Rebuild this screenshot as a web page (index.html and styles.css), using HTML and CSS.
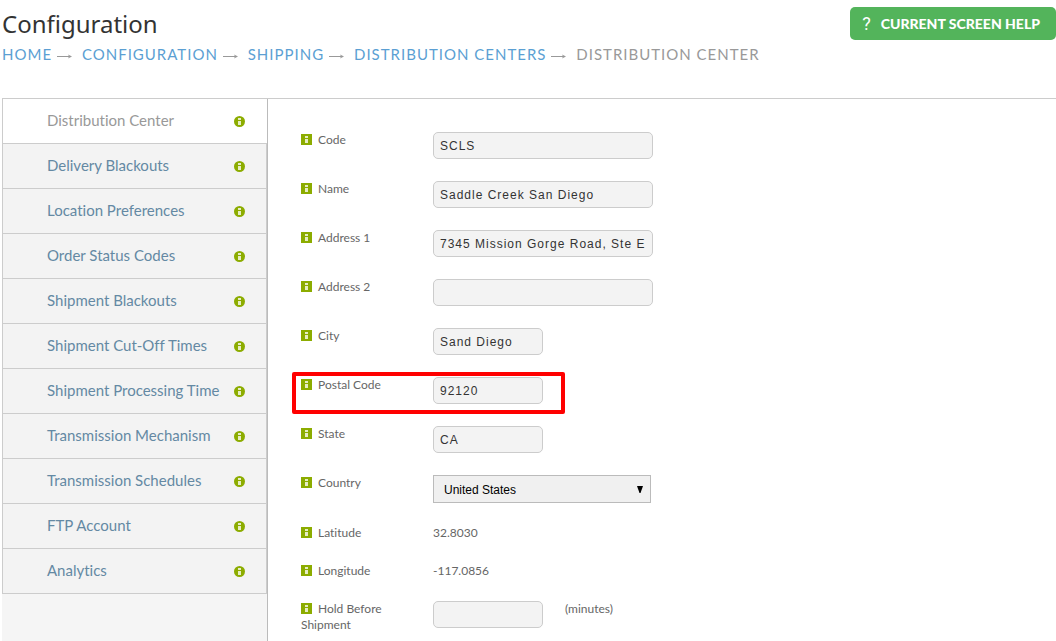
FILE: index.html
```html
<!DOCTYPE html>
<html lang="en">
<head>
  <meta charset="UTF-8" />
  <meta name="viewport" content="width=device-width, initial-scale=1.0"/>
  <title>Configuration - Distribution Center</title>
  <link rel="stylesheet" href="styles.css">
</head>
<body>

  <!-- Shared icons -->
  <svg class="sprite" aria-hidden="true">
    <symbol id="info-round" viewBox="0 0 11 11">
      <circle cx="5.5" cy="5.5" r="5.5" fill="#8cac00"/>
      <path d="M4 2h3v2H4zM4 5h3v4H4z" fill="#e6edc4"/>
    </symbol>
    <symbol id="info-square" viewBox="0 0 11 11">
      <path d="M0 0h11v11H0z" fill="#8cac00"/>
      <path d="M4 2h3v2H4zM4 5h3v4H4z" fill="#e6edc4"/>
    </symbol>
    <symbol id="arrow" viewBox="0 0 15 7">
      <path d="M0 3.5h14" fill="none" stroke="#999"/>
      <path d="M11 1.5l4 2-4 2 1-2z" fill="#999"/>
    </symbol>
  </svg>

  <header class="page-header">
    <div class="heading">
      <h1>Configuration</h1>
      <nav class="breadcrumb">
        <a href="#">Home</a><svg class="arrow"><use href="#arrow"/></svg>
        <a href="#">Configuration</a><svg class="arrow"><use href="#arrow"/></svg>
        <a href="#">Shipping</a><svg class="arrow"><use href="#arrow"/></svg>
        <a href="#">Distribution Centers</a><svg class="arrow"><use href="#arrow"/></svg>
        <span>Distribution Center</span>
      </nav>
    </div>
    <button type="button" class="help-btn"><span class="help-mark">?</span>Current Screen Help</button>
  </header>

  <main class="layout">
    <nav class="sidebar">
      <ul>
        <li class="active"><a href="#">Distribution Center</a><svg class="info"><use href="#info-round"/></svg></li>
        <li><a href="#">Delivery Blackouts</a><svg class="info"><use href="#info-round"/></svg></li>
        <li><a href="#">Location Preferences</a><svg class="info"><use href="#info-round"/></svg></li>
        <li><a href="#">Order Status Codes</a><svg class="info"><use href="#info-round"/></svg></li>
        <li><a href="#">Shipment Blackouts</a><svg class="info"><use href="#info-round"/></svg></li>
        <li><a href="#">Shipment Cut-Off Times</a><svg class="info"><use href="#info-round"/></svg></li>
        <li><a href="#">Shipment Processing Time</a><svg class="info"><use href="#info-round"/></svg></li>
        <li><a href="#">Transmission Mechanism</a><svg class="info"><use href="#info-round"/></svg></li>
        <li><a href="#">Transmission Schedules</a><svg class="info"><use href="#info-round"/></svg></li>
        <li><a href="#">FTP Account</a><svg class="info"><use href="#info-round"/></svg></li>
        <li><a href="#">Analytics</a><svg class="info"><use href="#info-round"/></svg></li>
      </ul>
    </nav>

    <form class="center-form">
      <div class="row">
        <label for="code"><svg class="info"><use href="#info-square"/></svg>Code</label>
        <input type="text" id="code" value="SCLS">
      </div>
      <div class="row">
        <label for="name"><svg class="info"><use href="#info-square"/></svg>Name</label>
        <input type="text" id="name" value="Saddle Creek San Diego">
      </div>
      <div class="row">
        <label for="address1"><svg class="info"><use href="#info-square"/></svg>Address 1</label>
        <input type="text" id="address1" value="7345 Mission Gorge Road, Ste E">
      </div>
      <div class="row">
        <label for="address2"><svg class="info"><use href="#info-square"/></svg>Address 2</label>
        <input type="text" id="address2">
      </div>
      <div class="row">
        <label for="city"><svg class="info"><use href="#info-square"/></svg>City</label>
        <input type="text" id="city" class="short" value="Sand Diego">
      </div>
      <div class="row highlight">
        <label for="postal"><svg class="info"><use href="#info-square"/></svg>Postal Code</label>
        <input type="text" id="postal" class="short" value="92120">
      </div>
      <div class="row">
        <label for="state"><svg class="info"><use href="#info-square"/></svg>State</label>
        <input type="text" id="state" class="short" value="CA">
      </div>
      <div class="row">
        <label for="country"><svg class="info"><use href="#info-square"/></svg>Country</label>
        <div class="select-wrap">
          <select id="country">
            <option>United States</option>
          </select>
          <svg class="caret" viewBox="0 0 6 7"><path d="M0 0h6L3.5 7h-1z"/></svg>
        </div>
      </div>
      <div class="row">
        <label for="latitude"><svg class="info"><use href="#info-square"/></svg>Latitude</label>
        <output id="latitude">32.8030</output>
      </div>
      <div class="row">
        <label for="longitude"><svg class="info"><use href="#info-square"/></svg>Longitude</label>
        <output id="longitude">-117.0856</output>
      </div>
      <div class="row">
        <label for="hold"><svg class="info"><use href="#info-square"/></svg>Hold Before Shipment</label>
        <input type="text" id="hold" class="short">
        <span class="unit">(minutes)</span>
      </div>
    </form>
  </main>

</body>
</html>
```
FILE: styles.css
```css
:root {
  --link: #5b9fd3;
  --nav: #6489a3;
  --muted: #999;
  --line: #ccc;
  --field: #f3f3f3;
  --green: #53b45b;
}

*,
*::after {
  box-sizing: border-box;
}

body {
  margin: 0;
  min-height: 100vh;
  display: flex;
  flex-direction: column;
  overflow-x: hidden;
  font-family: Lato, sans-serif;
  font-size: 12px;
  font-variant-ligatures: none;
  line-height: 16px;
  color: #666;
  background: #fff;
}

a {
  text-decoration: none;
}

.sprite {
  display: none;
}

.info {
  width: 11px;
  height: 11px;
  flex: none;
}

/* Header */
.page-header {
  display: flex;
  justify-content: space-between;
  align-items: flex-start;
  padding: 7px 0 0 2px;
  height: 98px;
}

h1 {
  margin: 0;
  font-family: "Noto Sans", sans-serif;
  font-size: 24px;
  font-weight: normal;
  line-height: 34px;
  color: #333;
}

.breadcrumb {
  margin-top: 3px;
  font-size: 15px;
  line-height: 20px;
  letter-spacing: 1px;
  text-transform: uppercase;
  color: var(--muted);
}

.breadcrumb a {
  color: var(--link);
}

.arrow {
  width: 15px;
  height: 7px;
  margin: 0 5px;
}

.help-btn {
  display: flex;
  align-items: center;
  height: 33px;
  padding: 0 16px 0 12px;
  border: none;
  border-radius: 5px;
  background: var(--green);
  color: #fff;
  font-family: inherit;
  font-size: 14px;
  font-weight: 900;
  text-transform: uppercase;
  cursor: pointer;
}

.help-mark {
  margin-right: 10px;
  font-family: Roboto, sans-serif;
  font-size: 18px;
  font-weight: normal;
}

/* Sidebar */
.layout {
  flex: 1;
  display: flex;
  margin-left: 2px;
  border-top: 1px solid var(--line);
}

.sidebar {
  flex: none;
  width: 266px;
  background: #f5f5f5;
  border-right: 1px solid #bbb;
}

.sidebar ul {
  margin: 0;
  padding: 0;
  list-style: none;
}

.sidebar li {
  display: flex;
  align-items: center;
  justify-content: space-between;
  height: 45px;
  padding: 0 21px 0 44px;
  border: 1px solid var(--line);
  border-top: none;
  background: var(--field);
}

.sidebar li.active {
  padding-right: 22px;
  border-right: none;
  background: #fff;
}

.sidebar a {
  padding-bottom: 2px;
  font-size: 15px;
  line-height: 20px;
  color: var(--nav);
}

.sidebar .active a {
  color: var(--muted);
}

/* Form */
.center-form {
  flex: 1;
  display: flex;
  flex-direction: column;
  gap: 22px;
  padding: 33px 0 0 33px;
}

.row {
  position: relative;
  display: flex;
  align-items: flex-start;
}

.row label {
  flex: none;
  width: 100px;
  margin-right: 32px;
}

.row label .info {
  margin-right: 6px;
  vertical-align: -1px;
}

input {
  width: 220px;
  height: 27px;
  padding: 0 6px;
  border: 1px solid var(--line);
  border-radius: 5px;
  background: var(--field);
  font-family: "Liberation Sans", Arial, sans-serif;
  font-size: 12px;
  letter-spacing: 1px;
  color: #333;
}

input.short {
  width: 110px;
}

.select-wrap {
  position: relative;
}

select {
  display: block;
  width: 218px;
  height: 28px;
  padding: 1px 10px 0;
  appearance: none;
  border: 1px solid #bbb;
  border-radius: 0;
  background: #f0f0f0;
  font-family: "Liberation Sans", Arial, sans-serif;
  font-size: 12px;
  color: #000;
}

.caret {
  position: absolute;
  top: 11px;
  right: 8px;
  width: 6px;
  height: 7px;
  pointer-events: none;
}

.unit {
  margin-left: 22px;
}

.highlight::after {
  content: "";
  position: absolute;
  top: -5px;
  left: -9px;
  width: 273px;
  height: 42px;
  border: 4px solid #f00;
  border-radius: 2px;
  pointer-events: none;
}
```
